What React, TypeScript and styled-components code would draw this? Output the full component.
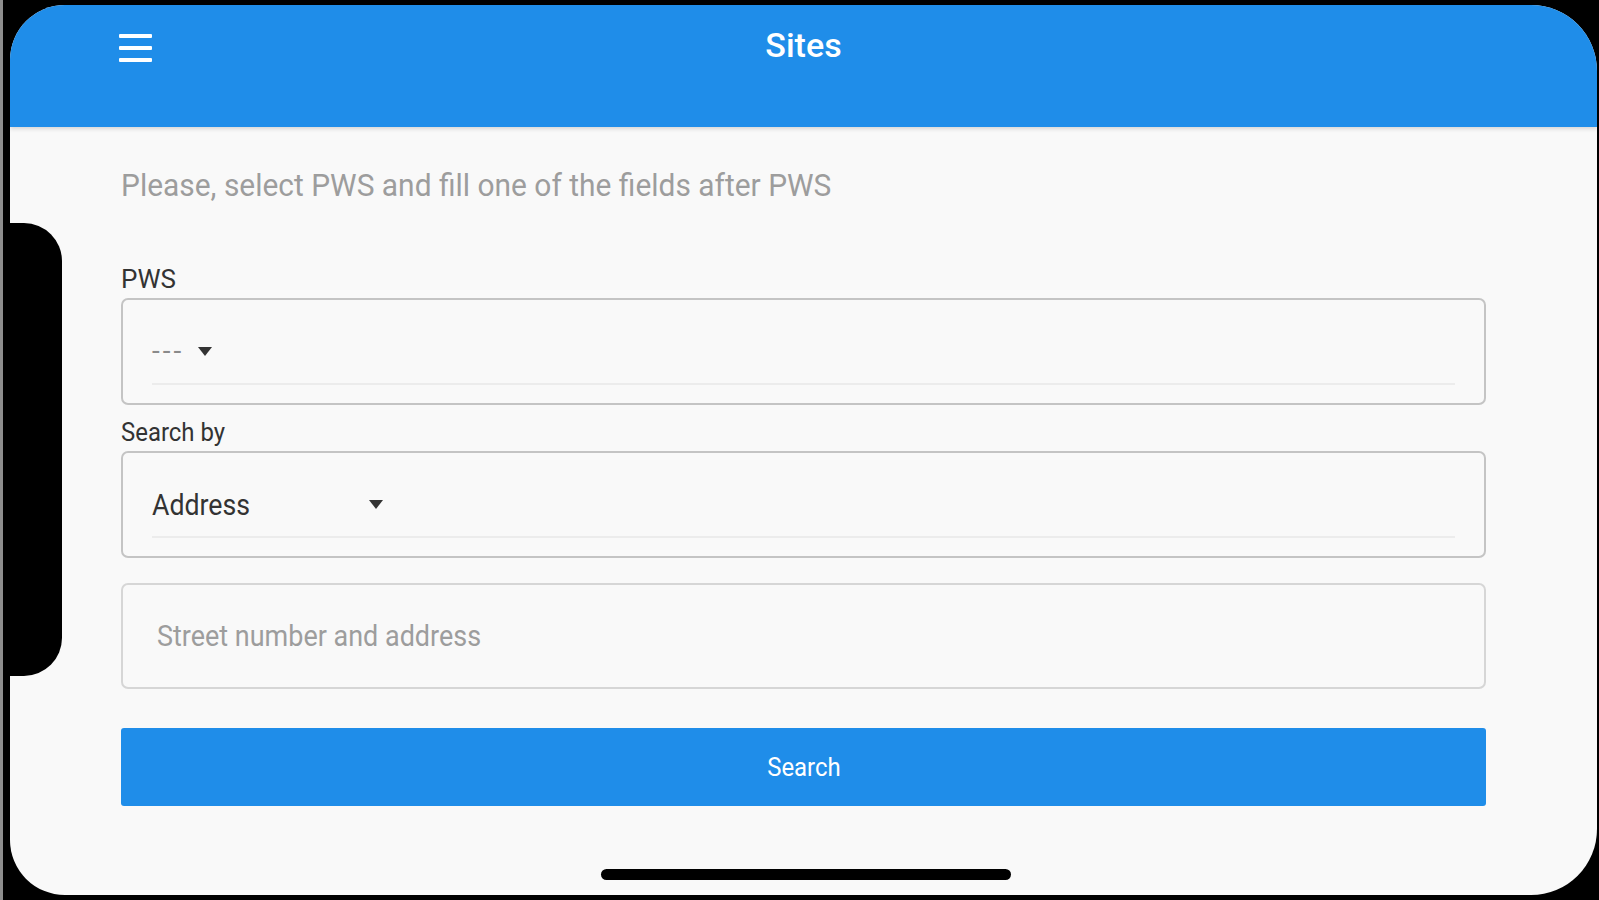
import React from "react";
import styled, { createGlobalStyle } from "styled-components";

const GlobalStyle = createGlobalStyle`
  html, body {
    margin: 0;
    padding: 0;
    background: #000;
  }
  body {
    width: 1599px;
    height: 900px;
    overflow: hidden;
    font-family: Roboto, "Liberation Sans", Arial, sans-serif;
  }
  * { box-sizing: border-box; }
`;

const Device = styled.div`
  position: relative;
  width: 1599px;
  height: 900px;
  background: #000;
  border-left: 3px solid #8e8e8e;
  padding: 5px 2px 5px 7px;
  display: flex;
`;

const Notch = styled.div`
  position: absolute;
  left: 7px;
  top: 223px;
  width: 52px;
  height: 453px;
  background: #000;
  border-radius: 0 38px 38px 0;
  z-index: 2;
`;

const Screen = styled.div`
  position: relative;
  flex: 1;
  display: flex;
  flex-direction: column;
  background: #f9f9f9;
  border-radius: 55px 66px 66px 55px;
  overflow: hidden;
`;

const Header = styled.header`
  height: 122px;
  flex: none;
  background: #1f8de9;
  display: grid;
  grid-template-columns: 1fr auto 1fr;
  align-items: start;
  box-shadow: 0 2px 4px rgba(0, 0, 0, 0.14);
  position: relative;
  z-index: 1;
`;

const MenuButton = styled.div`
  margin: 29px 0 0 109px;
  width: 33px;
  height: 28px;
  display: flex;
  flex-direction: column;
  justify-content: space-between;
  & > span {
    display: block;
    height: 4px;
    border-radius: 1px;
    background: #ffffff;
  }
`;

const Title = styled.h1`
  margin: 21px 0 0;
  font-size: 34px;
  font-weight: 500;
  line-height: 1.172;
  color: #ffffff;
`;

const Condensed = styled.span<{ $scale: number; $origin?: string }>`
  display: inline-block;
  transform: scaleX(${(p) => p.$scale});
  transform-origin: ${(p) => p.$origin ?? "left"} center;
  white-space: nowrap;
`;

const Content = styled.main`
  display: flex;
  flex-direction: column;
  padding: 0 111px;
`;

const Hint = styled.p`
  margin: 40px 0 0;
  font-size: 32px;
  line-height: 1.172;
  color: #9d9d9d;
`;

const Label = styled.label<{ $top: number }>`
  display: block;
  margin: ${(p) => p.$top}px 0 4px;
  font-size: 26px;
  line-height: 1.172;
  color: #333;
`;

const SelectBox = styled.div`
  height: 107px;
  border: 2px solid #c4c4c4;
  border-radius: 7px;
  padding: 0 29px;
`;

const SelectInner = styled.div<{ $pad: number }>`
  height: 85px;
  padding-top: ${(p) => p.$pad}px;
  display: flex;
  align-items: center;
  border-bottom: 2px solid #ececec;
`;

const SelectValue = styled.span<{ $muted?: boolean; $width?: number }>`
  font-size: ${(p) => (p.$muted ? 28 : 30)}px;
  line-height: 1.172;
  letter-spacing: ${(p) => (p.$muted ? 3 : 0)}px;
  color: ${(p) => (p.$muted ? "#8a8a8a" : "#333")};
  width: ${(p) => (p.$width ? `${p.$width}px` : "auto")};
  margin-right: ${(p) => (p.$width ? 0 : 14)}px;
`;

const Caret = styled.span`
  width: 0;
  height: 0;
  border-left: 7.5px solid transparent;
  border-right: 7.5px solid transparent;
  border-top: 9px solid #333;
`;

const InputBox = styled.div`
  margin-top: 25px;
  height: 106px;
  border: 2px solid #d6d6d6;
  border-radius: 7px;
  padding-left: 34px;
  display: flex;
  align-items: center;
`;

const Placeholder = styled.span`
  font-size: 29px;
  line-height: 1.172;
  color: #9d9d9d;
`;

const SearchButton = styled.button`
  margin-top: 39px;
  height: 78px;
  border: none;
  border-radius: 3px;
  background: #1f8de9;
  color: #ffffff;
  font-family: inherit;
  font-size: 26px;
  display: flex;
  align-items: center;
  justify-content: center;
  padding: 0;
`;

const HomeBar = styled.div`
  position: absolute;
  left: 591px;
  bottom: 15px;
  width: 410px;
  height: 11px;
  border-radius: 6px;
  background: #000;
`;

export default function App() {
  return (
    <>
      <GlobalStyle />
      <Device>
        <Notch />
        <Screen>
          <Header>
            <MenuButton>
              <span />
              <span />
              <span />
            </MenuButton>
            <Title>Sites</Title>
            <div />
          </Header>
          <Content>
            <Hint>
              <Condensed $scale={0.935}>
                Please, select PWS and fill one of the fields after PWS
              </Condensed>
            </Hint>
            <Label $top={59}>PWS</Label>
            <SelectBox>
              <SelectInner $pad={20}>
                <SelectValue $muted>---</SelectValue>
                <Caret />
              </SelectInner>
            </SelectBox>
            <Label $top={12}>
              <Condensed $scale={0.92}>Search by</Condensed>
            </Label>
            <SelectBox>
              <SelectInner $pad={20}>
                <SelectValue $width={217}>
                  <Condensed $scale={0.89}>Address</Condensed>
                </SelectValue>
                <Caret />
              </SelectInner>
            </SelectBox>
            <InputBox>
              <Placeholder>
                <Condensed $scale={0.93}>Street number and address</Condensed>
              </Placeholder>
            </InputBox>
            <SearchButton>
              <Condensed $scale={0.92} $origin="center">
                Search
              </Condensed>
            </SearchButton>
          </Content>
          <HomeBar />
        </Screen>
      </Device>
    </>
  );
}
